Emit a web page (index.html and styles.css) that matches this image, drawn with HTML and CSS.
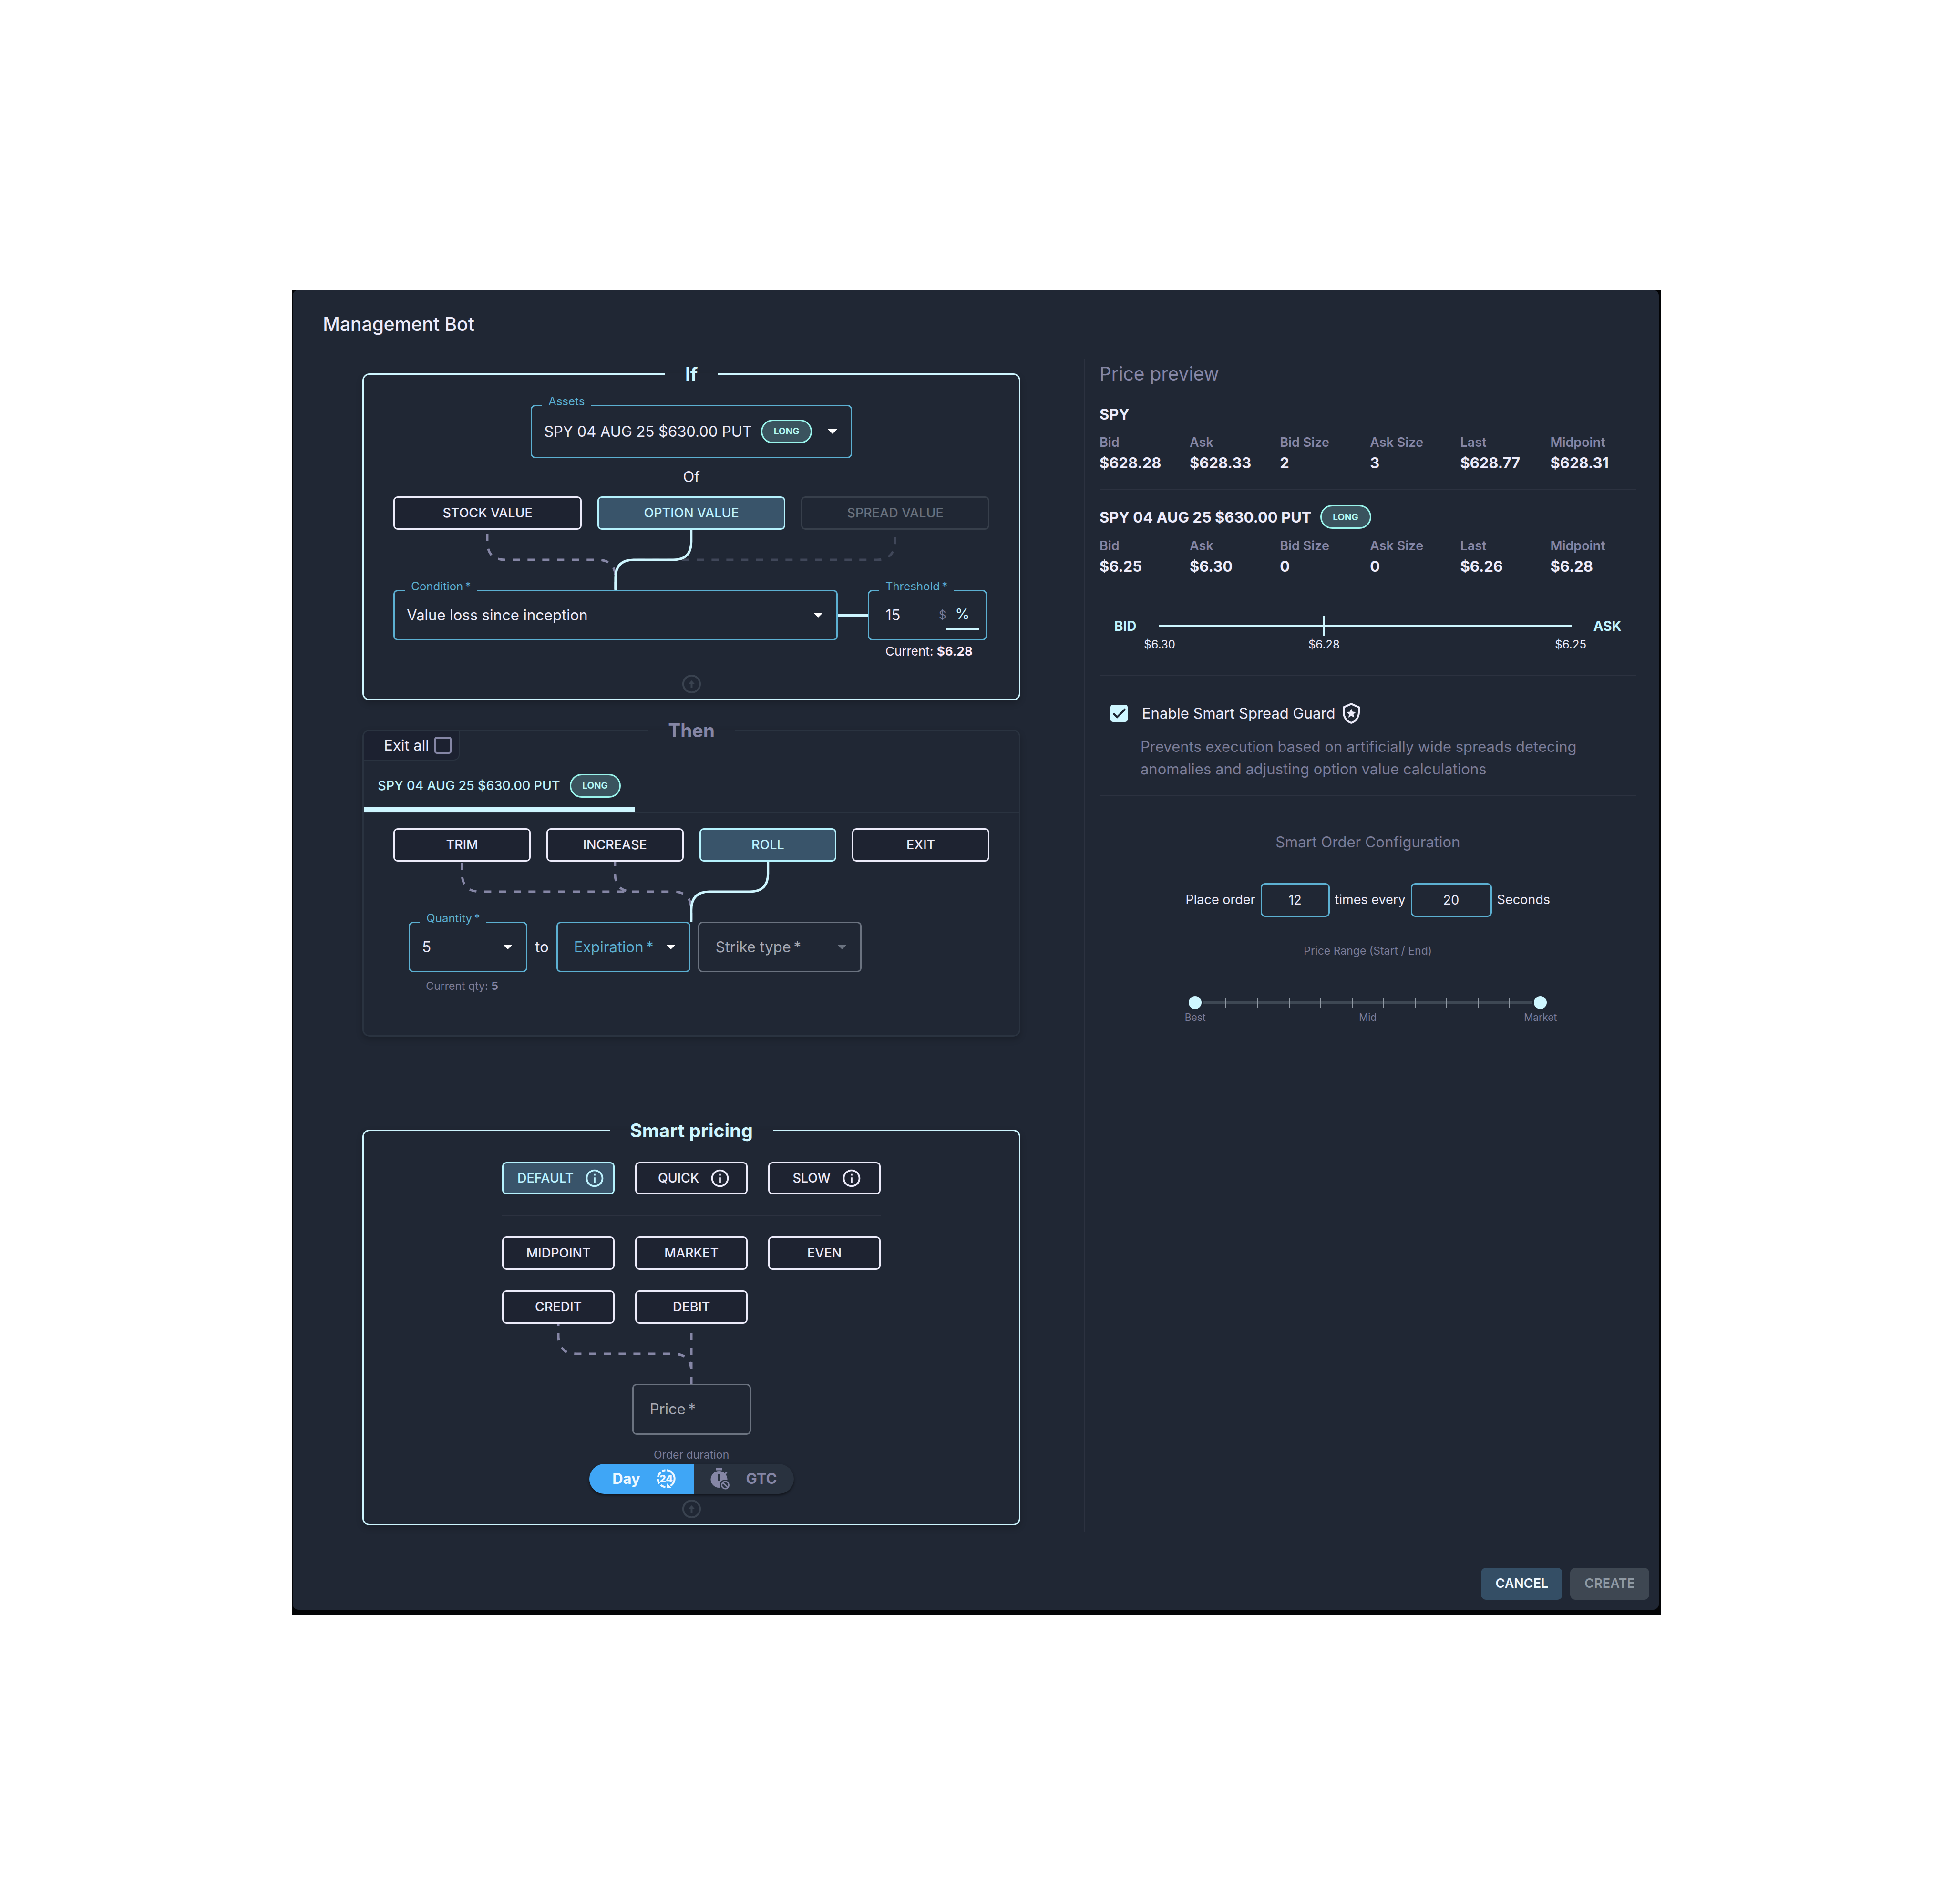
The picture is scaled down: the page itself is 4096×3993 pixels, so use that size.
FILE: index.html
```html
<!DOCTYPE html>
<html lang="en">
<head>
  <meta charset="UTF-8" />
  <meta name="viewport" content="width=device-width, initial-scale=1.0" />
  <title>Management Bot</title>
  <link rel="stylesheet" href="styles.css">
</head>
<body>
  <!-- Shared icons -->
  <svg class="sprite" aria-hidden="true">
    <symbol id="icon-info" viewBox="0 0 24 24">
      <path d="M11 7h2v2h-2zm0 4h2v6h-2zm1-9C6.48 2 2 6.48 2 12s4.480 10 10 10 10-4.480 10-10S17.520 2 12 2zm0 18c-4.410 0-8-3.590-8-8s3.590-8 8-8 8 3.590 8 8-3.590 8-8 8z" />
    </symbol>
    <symbol id="icon-up" viewBox="0 0 24 24">
      <circle cx="12" cy="12" r="9" fill="none" stroke="currentColor" stroke-width="2" />
      <path d="M12 8.200l3.200 3.600h-2.200v4h-2v-4h-2.200z" />
    </symbol>
    <symbol id="icon-caret" viewBox="0 0 10 5">
      <path d="M0 0l5 5 5-5z" />
    </symbol>
  </svg>

  <div class="backdrop">
    <div class="dialog" role="dialog" aria-labelledby="dialogTitle">
      <h1 class="dialog-title" id="dialogTitle">Management Bot</h1>

      <div class="dialog-body">
        <main class="rules">

          <!-- If -->
          <fieldset class="card card-if">
            <legend>If</legend>

            <div class="field field-assets">
              <label for="assets">Assets</label>
              <select id="assets">
                <option>SPY 04 AUG 25 $630.00 PUT</option>
              </select>
              <span class="chip">LONG</span>
              <svg class="caret"><use href="#icon-caret" /></svg>
            </div>

            <p class="of">Of</p>

            <div class="choices cols-3">
              <button type="button" class="btn">STOCK VALUE</button>
              <button type="button" class="btn active" aria-pressed="true">OPTION VALUE</button>
              <button type="button" class="btn" disabled>SPREAD VALUE</button>
            </div>

            <svg class="connector" viewBox="0 0 1250 126" preserveAspectRatio="none">
              <path class="wire off" stroke-dashoffset="-15" d="M1052 0V25Q1052 63 1014 63H504Q466 63 466 101V126" />
              <path class="wire dashed" stroke-dashoffset="-9" d="M197 0V25Q197 63 235 63H428Q466 63 466 101V126" />
              <path class="wire" d="M625 0V25Q625 63 587 63H504Q466 63 466 101V126" />
            </svg>

            <div class="condition-row">
              <div class="field field-condition">
                <label for="condition">Condition&thinsp;*</label>
                <select id="condition">
                  <option>Value loss since inception</option>
                </select>
                <svg class="caret"><use href="#icon-caret" /></svg>
              </div>
              <div class="link"></div>
              <div class="threshold">
                <div class="field field-threshold">
                  <label for="threshold">Threshold&thinsp;*</label>
                  <input type="text" id="threshold" value="15">
                  <button type="button" class="unit">$</button>
                  <button type="button" class="unit selected" aria-pressed="true">%</button>
                </div>
                <p class="current">Current: <b>$6.28</b></p>
              </div>
            </div>

            <svg class="icon-up"><use href="#icon-up" /></svg>
          </fieldset>

          <!-- Then -->
          <fieldset class="card card-then">
            <legend>Then</legend>

            <div class="exit-all">
              <label for="exitAll">Exit all</label>
              <input type="checkbox" id="exitAll" class="checkbox">
            </div>

            <div class="tabs" role="tablist">
              <button type="button" class="tab" role="tab" aria-selected="true">
                SPY 04 AUG 25 $630.00 PUT <span class="chip">LONG</span>
              </button>
            </div>

            <div class="then-body">
              <div class="choices cols-4">
                <button type="button" class="btn">TRIM</button>
                <button type="button" class="btn">INCREASE</button>
                <button type="button" class="btn active" aria-pressed="true">ROLL</button>
                <button type="button" class="btn">EXIT</button>
              </div>

              <svg class="connector" viewBox="0 0 1250 126" preserveAspectRatio="none">
                <path class="wire dashed" stroke-dashoffset="-2" d="M144 0V25Q144 63 182 63H587Q625 63 625 101V126" />
                <path class="wire dashed" stroke-dashoffset="5" d="M465 0V25Q465 63 503 63" />
                <path class="wire" d="M786 0V25Q786 63 748 63H663Q625 63 625 101V126" />
              </svg>

              <div class="roll-row">
                <div class="quantity">
                  <div class="field field-quantity">
                    <label for="quantity">Quantity&thinsp;*</label>
                    <select id="quantity">
                      <option>5</option>
                    </select>
                    <svg class="caret"><use href="#icon-caret" /></svg>
                  </div>
                  <p class="current-qty">Current qty: <b>5</b></p>
                </div>
                <span class="to">to</span>
                <div class="field empty field-expiration">
                  <label for="expiration">Expiration&thinsp;*</label>
                  <select id="expiration">
                    <option value=""></option>
                  </select>
                  <svg class="caret"><use href="#icon-caret" /></svg>
                </div>
                <div class="field empty disabled field-strike">
                  <label for="strike">Strike type&thinsp;*</label>
                  <select id="strike" disabled>
                    <option value=""></option>
                  </select>
                  <svg class="caret"><use href="#icon-caret" /></svg>
                </div>
              </div>
            </div>
          </fieldset>

          <!-- Smart pricing -->
          <fieldset class="card card-pricing">
            <legend>Smart pricing</legend>

            <div class="pricing">
              <div class="pricing-grid presets">
                <button type="button" class="btn active" aria-pressed="true">DEFAULT <svg class="icon-info"><use href="#icon-info" /></svg></button>
                <button type="button" class="btn">QUICK <svg class="icon-info"><use href="#icon-info" /></svg></button>
                <button type="button" class="btn">SLOW <svg class="icon-info"><use href="#icon-info" /></svg></button>
              </div>
              <hr>
              <div class="pricing-grid">
                <button type="button" class="btn">MIDPOINT</button>
                <button type="button" class="btn">MARKET</button>
                <button type="button" class="btn">EVEN</button>
                <button type="button" class="btn">CREDIT</button>
                <button type="button" class="btn">DEBIT</button>
              </div>

              <svg class="connector" viewBox="0 0 794 126" preserveAspectRatio="none">
                <path class="wire dashed" stroke-dashoffset="11" d="M118 0V25Q118 63 156 63H359Q397 63 397 101" />
                <path class="wire dashed" stroke-dashoffset="0" d="M397 19V126" />
              </svg>
            </div>

            <div class="field empty disabled field-price">
              <label for="price">Price&thinsp;*</label>
              <input type="text" id="price" disabled>
            </div>

            <p class="duration-label" id="durationLabel">Order duration</p>
            <div class="duration" role="group" aria-labelledby="durationLabel">
              <button type="button" class="day" aria-pressed="true">
                Day
                <svg viewBox="0 0 40 40">
                  <path class="ring" d="M21.500 2.300A17.800 17.800 0 0 1 29.500 35" />
                  <path class="ring" stroke-dasharray="11 3.900" d="M18.500 37.700A17.800 17.800 0 0 1 18.500 2.300" />
                  <path d="M21.500 29.500v10.500h10.500z" />
                  <text x="20" y="28" text-anchor="middle">24</text>
                </svg>
              </button>
              <button type="button" class="gtc">
                <svg viewBox="0 0 40 45">
                  <path d="M12 0h12v4.400h-12zM29.500 11l4-4 2 2-3.500 4.500z" />
                  <circle cx="18" cy="23.500" r="17.500" />
                  <path class="cut" d="M16 12h4v14h-4z" />
                  <circle class="cut" cx="31" cy="35.500" r="11.500" />
                  <circle class="ban" cx="31" cy="35.500" r="7.500" />
                  <path class="ban" d="M26 30.500l10 10" />
                </svg>
                GTC
              </button>
            </div>

            <svg class="icon-up"><use href="#icon-up" /></svg>
          </fieldset>
        </main>

        <!-- Price preview -->
        <aside class="preview">
          <h2>Price preview</h2>

          <h3>SPY</h3>
          <table class="quotes">
            <thead>
              <tr><th>Bid</th><th>Ask</th><th>Bid Size</th><th>Ask Size</th><th>Last</th><th>Midpoint</th></tr>
            </thead>
            <tbody>
              <tr><td>$628.28</td><td>$628.33</td><td>2</td><td>3</td><td>$628.77</td><td>$628.31</td></tr>
            </tbody>
          </table>

          <hr>

          <h3 class="option-title">SPY 04 AUG 25 $630.00 PUT <span class="chip">LONG</span></h3>
          <table class="quotes">
            <thead>
              <tr><th>Bid</th><th>Ask</th><th>Bid Size</th><th>Ask Size</th><th>Last</th><th>Midpoint</th></tr>
            </thead>
            <tbody>
              <tr><td>$6.25</td><td>$6.30</td><td>0</td><td>0</td><td>$6.26</td><td>$6.28</td></tr>
            </tbody>
          </table>

          <div class="gauge">
            <span class="gauge-end">BID</span>
            <div class="gauge-line">
              <span class="gauge-mark edge" style="left: 0%"><span>$6.30</span></span>
              <span class="gauge-mark" style="left: 40%"><span>$6.28</span></span>
              <span class="gauge-mark edge" style="left: 100%"><span>$6.25</span></span>
            </div>
            <span class="gauge-end">ASK</span>
          </div>

          <hr>

          <div class="guard">
            <input type="checkbox" id="guard" class="checkbox" checked>
            <label for="guard">Enable Smart Spread Guard</label>
            <svg class="icon-shield" viewBox="0 0 18 22">
              <path fill-rule="evenodd" d="M9 0L0 4v6c0 5.550 3.840 10.740 9 12 5.160-1.260 9-6.450 9-12V4zm0 2.190l7 3.110v4.700c0 4.520-2.980 8.690-7 9.930-4.020-1.240-7-5.410-7-9.930V5.300z" />
              <path d="M5.900 15.500l.82-3.520L4 9.620l3.590-.31L9 6l1.410 3.300 3.590.31-2.720 2.370.82 3.520L9 13.630z" />
            </svg>
          </div>
          <p class="guard-text">Prevents execution based on artificially wide spreads detecing anomalies and adjusting option value calculations</p>

          <hr>

          <h4 class="config-title">Smart Order Configuration</h4>
          <div class="order-row">
            <label for="times">Place order</label>
            <input type="text" id="times" class="times" value="12">
            <label for="seconds">times every</label>
            <input type="text" id="seconds" class="seconds" value="20">
            <span>Seconds</span>
          </div>

          <p class="range-title">Price Range (Start / End)</p>
          <div class="range">
            <div class="range-ticks">
              <i></i><i></i><i></i><i></i><i></i><i></i><i></i><i></i><i></i><i></i>
            </div>
            <input type="range" min="0" max="11" value="0" aria-label="Start">
            <input type="range" min="0" max="11" value="11" aria-label="End">
          </div>
          <div class="range-labels">
            <span>Best</span>
            <span>Mid</span>
            <span>Market</span>
          </div>
        </aside>
      </div>

      <footer class="dialog-actions">
        <button type="button" class="cancel">CANCEL</button>
        <button type="button" class="create" disabled>CREATE</button>
      </footer>
    </div>
  </div>
</body>
</html>
```
FILE: styles.css
```css
:root {
  --bg: #202734;
  --bg-dark: #1e2331;
  --ice: #cef6ff;
  --blue: #5cb0d2;
  --text: #ecebfa;
  --muted: #8586a5;
  --faint: #7b7d99;
  --line: #2a3340;
}

* {
  margin: 0;
  padding: 0;
  box-sizing: border-box;
}

body {
  min-height: 100vh;
  display: flex;
  align-items: center;
  justify-content: center;
  background: #fff;
  color: var(--text);
  font-family: Inter, sans-serif;
  font-size: 31px;
  line-height: 46px;
}

button,
input,
select {
  font: inherit;
  color: inherit;
  background: none;
  border: none;
  outline: none;
  appearance: none;
}

svg {
  fill: currentColor;
}

hr {
  border: none;
  border-top: 2px solid #2c3240;
}

.sprite {
  position: absolute;
  width: 0;
  height: 0;
}

.backdrop {
  width: 70.1%;
  padding: 0 5px 10px 2px;
  background: #030406;
}

.dialog {
  background: var(--bg);
  border-radius: 12px;
}

.dialog-title {
  padding: 49px 63px 50px;
  font-size: 39px;
  font-weight: 500;
}

.dialog-body {
  display: grid;
  grid-template-columns: minmax(0, 553fr) minmax(0, 402fr);
}

/* Cards */

.rules {
  padding: 9px 133px 14px 146px;
}

.card {
  min-width: 0;
  padding: 0 62px;
  border: 3px solid var(--ice);
  border-radius: 15px;
  box-shadow: 0 6px 14px rgba(0, 0, 0, 0.2);
}

.card legend {
  margin: 0 auto;
  padding: 0 42px;
  font-size: 39px;
  font-weight: 700;
  color: var(--ice);
}

.card-if {
  padding-top: 41px;
  padding-bottom: 8px;
}

.card-then {
  margin-top: 40px;
  padding: 0;
  border-color: var(--line);
}

.card-then legend {
  color: var(--muted);
}

.card-pricing {
  margin-top: 174px;
  padding-top: 43px;
  padding-bottom: 8px;
}

.chip {
  display: inline-flex;
  align-items: center;
  justify-content: center;
  width: 107px;
  height: 50px;
  border: 3px solid #9af5ec;
  border-radius: 25px;
  background: #3a535e;
  color: #b5f8f4;
  font-size: 19px;
  font-weight: 700;
}

.icon-up {
  display: block;
  width: 47px;
  height: 47px;
  margin: 0 auto;
  color: #3a4350;
}

/* Outlined fields */

.field {
  position: relative;
  display: flex;
  align-items: center;
  height: 106px;
  padding: 0 28px 0 25px;
  border: 3px solid var(--blue);
  border-radius: 9px;
}

.field label {
  position: absolute;
  top: -26px;
  left: 21px;
  padding: 0 13px;
  background: var(--bg);
  color: var(--blue);
  font-size: 24px;
  line-height: 32px;
}

.field select,
.field input {
  flex: 1;
  min-width: 0;
  height: 100%;
}

.field.empty label {
  top: 27px;
  padding: 0 13px;
  background: none;
  font-size: 31px;
  line-height: 46px;
}

.field.disabled {
  border-color: #6b7380;
}

.field.disabled label {
  color: #a5a9b5;
}

.field.disabled .caret {
  color: #6b7380;
}

.caret {
  width: 20px;
  height: 10px;
  color: #fff;
}

/* Choice buttons */

.choices {
  display: grid;
  gap: 33px;
}

.cols-3 {
  grid-template-columns: repeat(3, 1fr);
}

.cols-4 {
  grid-template-columns: repeat(4, 1fr);
}

.btn {
  display: flex;
  align-items: center;
  justify-content: center;
  height: 70px;
  border: 3px solid var(--text);
  border-radius: 9px;
  background: var(--bg-dark);
  font-size: 27px;
  font-weight: 500;
}

.btn.active {
  border-color: #b5f2fd;
  background: #39546a;
  color: #bdf3ff;
}

.btn:disabled {
  border-color: #373f4b;
  background: none;
  color: #68717d;
}

.connector {
  display: block;
  width: 100%;
  height: 126px;
}

.wire {
  fill: none;
  stroke: var(--ice);
  stroke-width: 5;
}

.wire.dashed {
  stroke: var(--muted);
  stroke-dasharray: 15 16;
}

.wire.off {
  stroke: #404759;
  stroke-dasharray: 15 16;
}

/* If */

.field-assets {
  width: 674px;
  height: 112px;
  margin: 0 auto;
}

.field-assets .caret {
  margin-left: 33px;
}

.of {
  margin: 16px 0 18px;
  text-align: center;
}

.condition-row {
  display: flex;
  padding-right: 5px;
}

.field-condition {
  flex: 1;
}

.link {
  width: 63px;
  height: 5px;
  margin-top: 51px;
  background: var(--ice);
}

.threshold {
  width: 250px;
}

.field-threshold {
  padding: 0 14px 0 34px;
}

.unit {
  width: 15px;
  font-size: 24px;
  color: #7b7d99;
}

.unit.selected {
  width: 69px;
  height: 62px;
  border-bottom: 3px solid var(--ice);
  font-size: 31px;
  color: var(--ice);
}

.current {
  margin: 7px 0 29px 37px;
  font-size: 26px;
  line-height: 32px;
  color: #fdeaf8;
}

/* Then */

.exit-all {
  display: flex;
  align-items: center;
  justify-content: space-between;
  width: 201px;
  height: 62px;
  margin-top: -22px;
  padding: 0 15px 0 42px;
  border: solid var(--line);
  border-width: 0 2px 2px 0;
  border-radius: 12px 0 12px 0;
  background: #1c2130;
}

.checkbox {
  width: 36px;
  height: 36px;
  border: 4px solid var(--muted);
  border-radius: 5px;
}

.checkbox:checked {
  border: none;
  background: var(--ice) url("data:image/svg+xml,%3Csvg xmlns='http://www.w3.org/2000/svg' viewBox='0 0 18 18'%3E%3Cpath d='M3 9l4 4 8.500-8.500' fill='none' stroke='%231f2633' stroke-width='2'/%3E%3C/svg%3E");
}

.tabs {
  border-bottom: 3px solid var(--line);
}

.tab {
  display: flex;
  align-items: center;
  gap: 20px;
  height: 108px;
  padding: 8px 29px 0;
  border-bottom: 10px solid var(--ice);
  color: #bdf3ff;
  font-size: 27px;
  font-weight: 500;
}

.then-body {
  padding: 31px 62px 87px;
}

.roll-row {
  display: flex;
  gap: 16px;
  padding-left: 32px;
}

.quantity {
  width: 249px;
}

.to {
  margin-top: 30px;
}

.field-expiration {
  width: 281px;
}

.field-strike {
  width: 343px;
}

.current-qty {
  margin: 13px 0 0 36px;
  font-size: 23px;
  line-height: 32px;
  color: var(--faint);
}

.current-qty b {
  color: var(--muted);
}

/* Smart pricing */

.pricing {
  width: 794px;
  margin: 0 auto;
}

.pricing-grid {
  display: grid;
  grid-template-columns: repeat(3, 1fr);
  gap: 43px;
}

.pricing hr {
  margin: 43px 0;
}

.presets .btn {
  gap: 22px;
  height: 68px;
  padding-left: 12px;
}

.icon-info {
  width: 44px;
  height: 44px;
}

.field-price {
  width: 249px;
  height: 107px;
  margin: 0 auto;
}

.duration-label {
  margin: 26px 0 3px;
  text-align: center;
  font-size: 23px;
  line-height: 32px;
  color: var(--faint);
}

.duration {
  display: flex;
  width: 429px;
  height: 63px;
  margin: 0 auto 8px;
  border-radius: 32px;
  overflow: hidden;
  background: #29323f;
  box-shadow: 0 3px 5px rgba(0, 0, 0, 0.5);
}

.duration button {
  flex: 1;
  display: flex;
  align-items: center;
  justify-content: center;
  gap: 34px;
  font-weight: 700;
}

.duration .day {
  padding-left: 10px;
  background: #3fa6f6;
  color: #eef8ff;
}

.duration .gtc {
  color: var(--muted);
}

.duration svg {
  width: 40px;
}

.day text {
  font-size: 21px;
  font-weight: 900;
}

.ring {
  fill: none;
  stroke: currentColor;
  stroke-width: 4;
}

.cut {
  fill: #29323f;
}

.ban {
  fill: none;
  stroke: currentColor;
  stroke-width: 3;
}

/* Price preview */

.preview {
  padding: 8px 47px 0 31px;
  border-left: 2px solid #2c3240;
}

.preview h2 {
  margin-bottom: 40px;
  font-size: 39px;
  font-weight: 400;
  color: var(--muted);
}

.preview h3 {
  margin-bottom: 16px;
  font-size: 31px;
  font-weight: 700;
  line-height: 43px;
}

.preview .option-title {
  display: flex;
  align-items: center;
  gap: 18px;
  margin: 31px 0 13px;
  line-height: 51px;
}

.quotes {
  width: calc(100% + 9px);
  table-layout: fixed;
  border-collapse: collapse;
  text-align: left;
  line-height: 43px;
}

.quotes th {
  font-size: 27px;
  font-weight: 600;
  color: var(--muted);
}

.quotes td {
  font-weight: 700;
}

.quotes + hr {
  margin-top: 34px;
}

.gauge {
  display: flex;
  align-items: center;
  gap: 48px;
  height: 42px;
  margin: 83px 31px 81px;
}

.gauge-end {
  font-size: 28px;
  font-weight: 700;
  color: #bdf3ff;
}

.gauge-line {
  position: relative;
  flex: 1;
  height: 3px;
  background: var(--ice);
}

.gauge-mark {
  position: absolute;
  top: -19px;
  width: 5px;
  height: 41px;
  margin-left: -2px;
  background: var(--ice);
}

.gauge-mark.edge {
  top: -1px;
  height: 5px;
}

.gauge-mark span {
  position: absolute;
  top: 44px;
  left: -48px;
  width: 101px;
  text-align: center;
  font-size: 24px;
  line-height: 32px;
}

.gauge-mark.edge span {
  top: 26px;
}

.guard {
  display: flex;
  align-items: center;
  margin-top: 56px;
  padding-left: 23px;
}

.guard label {
  margin: 0 15px 0 30px;
}

.icon-shield {
  width: 36px;
  height: 44px;
}

.guard-text {
  margin: 23px 0 32px;
  padding: 0 80px 0 86px;
  line-height: 47px;
  color: var(--faint);
}

.config-title {
  margin: 73px 0 63px;
  text-align: center;
  font-weight: 400;
  color: var(--faint);
}

.order-row {
  display: flex;
  align-items: center;
  justify-content: center;
  gap: 11px;
  font-size: 27px;
}

.order-row input {
  height: 71px;
  border: 3px solid var(--blue);
  border-radius: 9px;
  text-align: center;
}

.times {
  width: 145px;
}

.seconds {
  width: 170px;
}

.range-title {
  margin: 55px 0 79px;
  text-align: center;
  font-size: 23px;
  line-height: 32px;
  color: var(--faint);
}

.range {
  position: relative;
  width: 751px;
  height: 28px;
  margin: 0 auto;
}

.range-ticks {
  display: flex;
  justify-content: space-evenly;
  align-items: center;
  height: 100%;
  margin: 0 13px;
  background: linear-gradient(#3e4854, #3e4854) center / 100% 5px no-repeat;
}

.range-ticks i {
  width: 2px;
  height: 22px;
  background: #8f98a3;
}

.range input {
  position: absolute;
  top: 0;
  left: 0;
  width: 100%;
  height: 100%;
  pointer-events: none;
}

.range input::-webkit-slider-thumb {
  appearance: none;
  width: 27px;
  height: 27px;
  border-radius: 50%;
  background: var(--ice);
  box-shadow: 0 0 0 3px var(--bg);
  pointer-events: auto;
}

.range-labels {
  display: grid;
  grid-template-columns: 80px 1fr 80px;
  width: 804px;
  margin: 3px auto 0;
  text-align: center;
  font-size: 21px;
  line-height: 28px;
  color: var(--faint);
}

/* Actions */

.dialog-actions {
  display: flex;
  justify-content: flex-end;
  gap: 16px;
  padding: 75px 20px 21px;
}

.dialog-actions button {
  height: 67px;
  padding: 0 30px;
  border-radius: 11px;
  font-size: 27px;
  font-weight: 600;
}

.cancel {
  background: #344e65;
  color: #eef8ff;
}

.create {
  background: #3e4752;
  color: #8e99a3;
}
```
